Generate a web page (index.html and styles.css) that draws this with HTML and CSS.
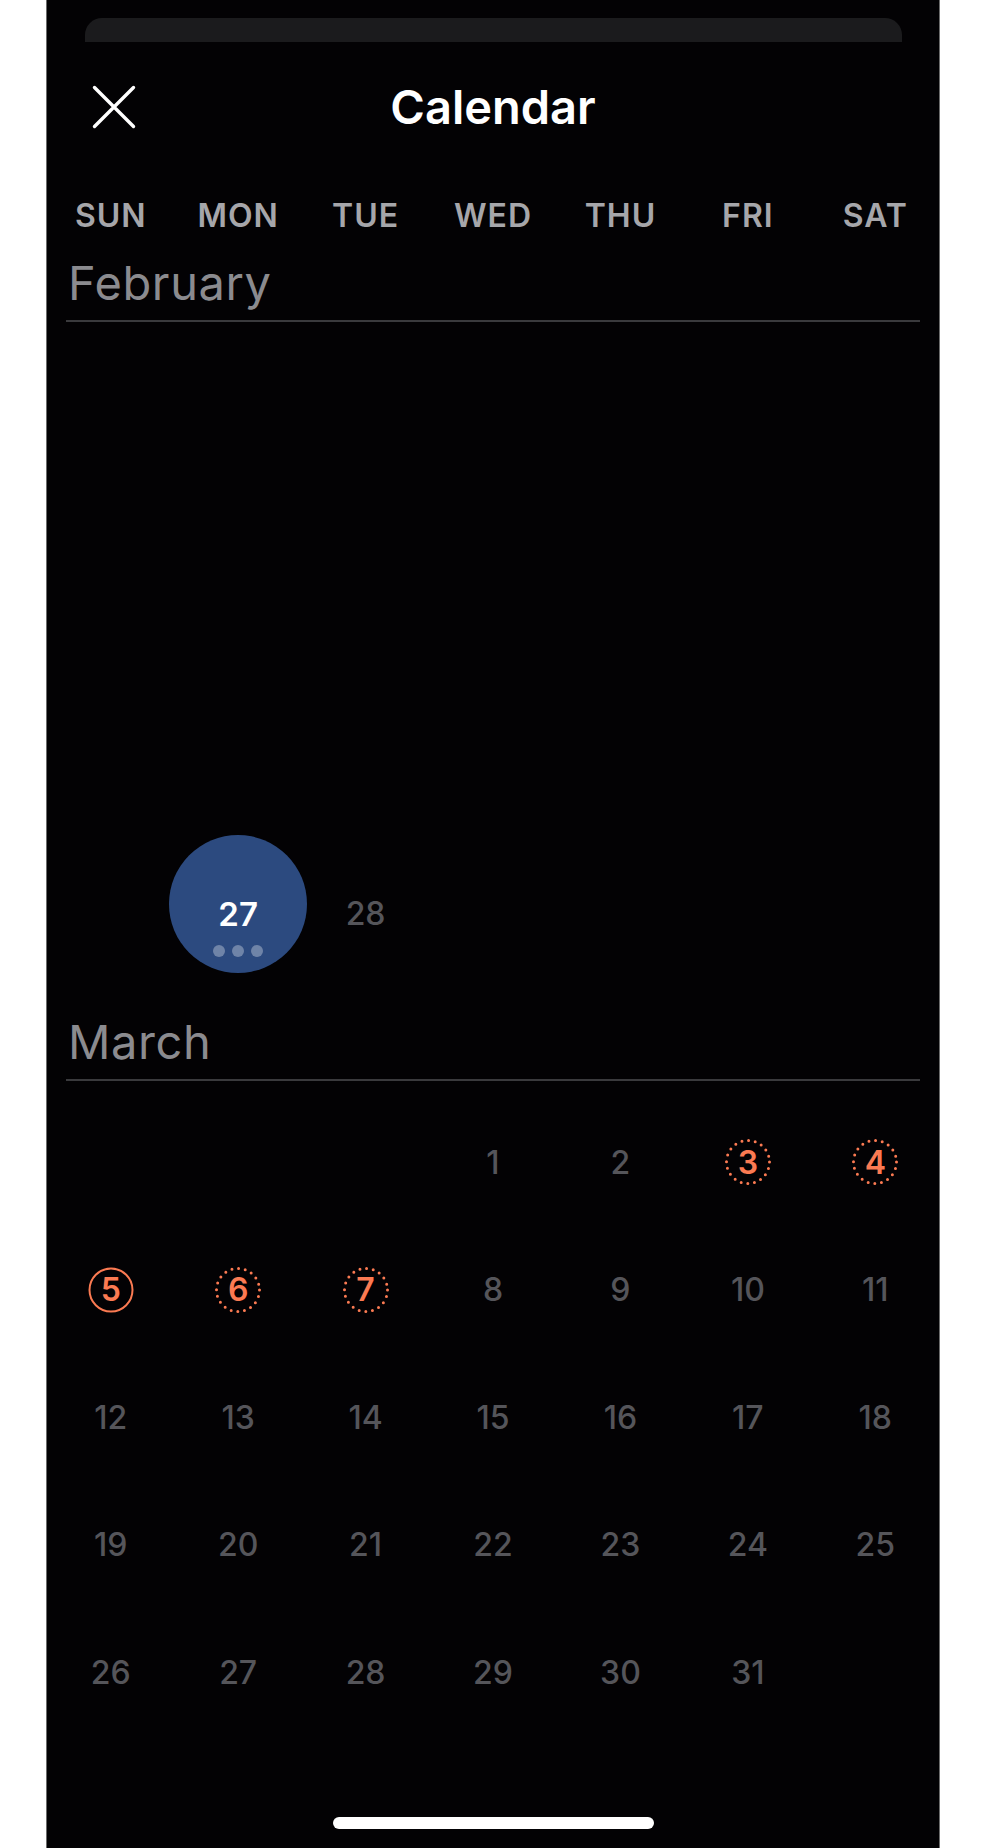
FILE: index.html
```html
<!DOCTYPE html>
<html lang="en">
<head>
<meta charset="utf-8">
<title>Calendar</title>
<link rel="stylesheet" href="styles.css">
</head>
<body>
<div class="phone">
  <div class="sheet-peek"></div>
  <header class="topbar">
    <button class="close" aria-label="Close">
      <svg width="44" height="44" viewBox="0 0 44 44"><path d="M2.5 2.5 L41.5 41.5 M41.5 2.5 L2.5 41.5" stroke="#fff" stroke-width="3.4" stroke-linecap="round" fill="none"/></svg>
    </button>
    <h1 class="title">Calendar</h1>
    <span></span>
  </header>
  <div class="weekdays">
    <span>SUN</span><span>MON</span><span>TUE</span><span>WED</span><span>THU</span><span>FRI</span><span>SAT</span>
  </div>

  <section class="month">
    <h2 class="month-name">February</h2>
    <div class="grid">
      <span></span><span></span><span></span><span></span><span></span><span></span><span></span>
      <span></span><span></span><span></span><span></span><span></span><span></span><span></span>
      <span></span><span></span><span></span><span></span><span></span><span></span><span></span>
      <span></span><span></span><span></span><span></span><span></span><span></span><span></span>
      <span></span>
      <span class="day selected"><span class="sel-bg"><i></i><i></i><i></i></span><b>27</b></span>
      <span class="day">28</span>
    </div>
  </section>

  <section class="month march">
    <h2 class="month-name">March</h2>
    <div class="grid">
      <span></span><span></span><span></span>
      <span class="day">1</span><span class="day">2</span>
      <span class="day mark"><svg class="ring" viewBox="0 0 46 46"><circle cx="23" cy="23" r="21.5" class="dotted"/></svg><b>3</b></span>
      <span class="day mark"><svg class="ring" viewBox="0 0 46 46"><circle cx="23" cy="23" r="21.5" class="dotted"/></svg><b>4</b></span>
      <span class="day mark"><svg class="ring" viewBox="0 0 46 46"><circle cx="23" cy="23" r="21.5" class="solid"/></svg><b>5</b></span>
      <span class="day mark"><svg class="ring" viewBox="0 0 46 46"><circle cx="23" cy="23" r="21.5" class="dotted"/></svg><b>6</b></span>
      <span class="day mark"><svg class="ring" viewBox="0 0 46 46"><circle cx="23" cy="23" r="21.5" class="dotted"/></svg><b>7</b></span>
      <span class="day">8</span><span class="day">9</span><span class="day">10</span><span class="day">11</span>
      <span class="day">12</span><span class="day">13</span><span class="day">14</span><span class="day">15</span><span class="day">16</span><span class="day">17</span><span class="day">18</span>
      <span class="day">19</span><span class="day">20</span><span class="day">21</span><span class="day">22</span><span class="day">23</span><span class="day">24</span><span class="day">25</span>
      <span class="day">26</span><span class="day">27</span><span class="day">28</span><span class="day">29</span><span class="day">30</span><span class="day">31</span><span></span>
    </div>
  </section>

  <div class="home-indicator"></div>
</div>
</body>
</html>
```

FILE: styles.css
```css
html, body {
  margin: 0;
  padding: 0;
  background: #ffffff;
}

body {
  font-family: "Inter", "Liberation Sans", sans-serif;
}

.phone {
  box-sizing: border-box;
  margin-left: 46px;
  width: 894px;
  height: 1848px;
  background: #030204;
  border-left: 1px solid #6c6c6c;
  border-right: 1px solid #6c6c6c;
  display: flex;
  flex-direction: column;
}

.sheet-peek {
  margin: 18px 37px 0 38px;
  height: 24px;
  background: #1b1b1d;
  border-radius: 17px 17px 0 0;
}

.topbar {
  margin-top: 37px;
  height: 56px;
  display: grid;
  grid-template-columns: 1fr auto 1fr;
  align-items: center;
}

.close {
  justify-self: start;
  margin-left: 45px;
  padding: 0;
  border: 0;
  background: none;
  width: 44px;
  height: 44px;
  display: flex;
}

.title {
  margin: 0;
  font-size: 47px;
  line-height: 56px;
  font-weight: 600;
  color: #ffffff;
  letter-spacing: 0;
}

.weekdays {
  margin-top: 61px;
  display: grid;
  grid-template-columns: repeat(7, 1fr);
  height: 40px;
  line-height: 40px;
  font-size: 32px;
  font-weight: 600;
  color: #a6a6aa;
  text-align: center;
  letter-spacing: 1px;
}

.month-name {
  margin: 19px 19px 0 19px;
  padding: 0 0 9px 2px;
  border-bottom: 2px solid #3a3a3d;
  font-size: 47px;
  line-height: 56px;
  font-weight: 400;
  color: #8b8b8f;
  letter-spacing: 0.6px;
}

.march .month-name {
  margin-top: 36px;
}

.grid {
  margin-top: 18px;
  display: grid;
  grid-template-columns: repeat(7, 1fr);
  grid-auto-rows: 127.5px;
}

.day {
  position: relative;
  display: flex;
  align-items: center;
  justify-content: center;
  font-size: 32px;
  font-weight: 500;
  color: #55555a;
}

.day b {
  position: relative;
  font-weight: 600;
}

.mark b {
  color: #fb7a52;
}

.ring {
  position: absolute;
  left: 50%;
  top: 50%;
  width: 46px;
  height: 46px;
  margin: -23px 0 0 -23px;
  fill: none;
  stroke: #fb7a52;
}

.ring .dotted {
  stroke-width: 3;
  stroke-linecap: round;
  stroke-dasharray: 0 6.75;
}

.ring .solid {
  stroke-width: 2;
}

.selected b {
  color: #ffffff;
  font-size: 33px;
  font-weight: 600;
}

.sel-bg {
  position: absolute;
  left: 50%;
  top: 50%;
  width: 138px;
  height: 138px;
  margin: -79px 0 0 -69px;
  border-radius: 50%;
  background: #2c4a7f;
  display: flex;
  justify-content: center;
  align-items: flex-end;
  gap: 7px;
  padding-bottom: 16px;
  box-sizing: border-box;
}

.sel-bg i {
  width: 12px;
  height: 12px;
  border-radius: 50%;
  background: rgba(255, 255, 255, 0.32);
}

.home-indicator {
  margin: auto auto 19px;
  width: 321px;
  height: 12px;
  border-radius: 6px;
  background: #ffffff;
}
```
